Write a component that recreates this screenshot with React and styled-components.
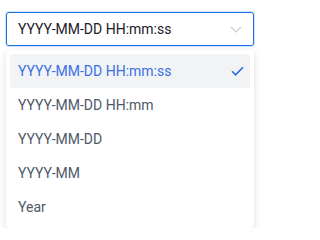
import React from "react";
import styled, { createGlobalStyle } from "styled-components";

const Global = createGlobalStyle`
  html, body { margin: 0; padding: 0; background: #fff; }
  body { font-family: Roboto, "Liberation Sans", sans-serif; }
`;

const Wrap = styled.div`
  padding: 12px 10px 0 6px;
  width: 248px;
`;

const Trigger = styled.div`
  box-sizing: border-box;
  height: 34px;
  display: flex;
  align-items: center;
  justify-content: space-between;
  padding: 0 11px 0 11px;
  border: 1px solid #1f6fe5;
  border-radius: 3px;
  box-shadow: 0 0 0 1px #cfe0fb;
  font-size: 14px;
  color: #1d2129;
`;

const Menu = styled.ul`
  list-style: none;
  margin: 4px 0 0;
  padding: 4px;
  border-radius: 4px;
  background: #fff;
  box-shadow: 0 3px 8px rgba(0, 0, 0, 0.12), 0 0 2px rgba(0, 0, 0, 0.06);
`;

const Item = styled.li`
  height: 34px;
  display: flex;
  align-items: center;
  justify-content: space-between;
  padding: 0 6px 0 8px;
  border-radius: 3px;
  font-size: 14px;
  color: ${(p) => (p.$selected ? "#3a6fe6" : "#4e5969")};
  background: ${(p) => (p.$selected ? "#f2f3f5" : "transparent")};
`;

const Chevron = () => (
  <svg width="12" height="7" viewBox="0 0 12 7" fill="none">
    <path d="M1 1l5 5 5-5" stroke="#c9cdd4" strokeWidth="1.2" />
  </svg>
);

const Check = () => (
  <svg width="13" height="10" viewBox="0 0 13 10" fill="none">
    <path d="M1 5.2l3.6 3.6L12 1.2" stroke="#2b6de5" strokeWidth="1.6" />
  </svg>
);

const options = ["YYYY-MM-DD HH:mm:ss", "YYYY-MM-DD HH:mm", "YYYY-MM-DD", "YYYY-MM", "Year"];

export default function App() {
  const selected = options[0];
  return (
    <>
      <Global />
      <Wrap>
        <Trigger>
          <span>{selected}</span>
          <Chevron />
        </Trigger>
        <Menu>
          {options.map((o) => (
            <Item key={o} $selected={o === selected}>
              <span>{o}</span>
              {o === selected && <Check />}
            </Item>
          ))}
        </Menu>
      </Wrap>
    </>
  );
}
